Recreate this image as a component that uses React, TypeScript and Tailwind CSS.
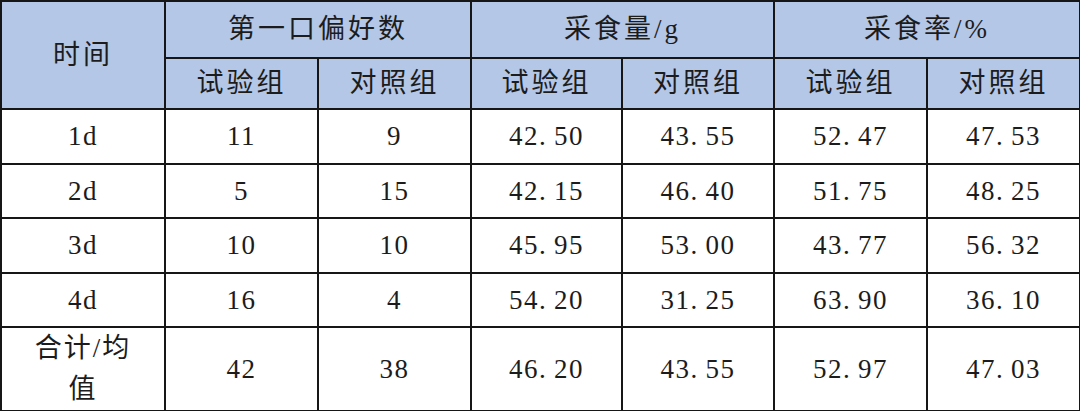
const FONT = "font-['Liberation_Serif','Noto_Sans_CJK_SC',serif]";

const rows = [
  ['1d', '11', '9', '42.50', '43.55', '52.47', '47.53'],
  ['2d', '5', '15', '42.15', '46.40', '51.75', '48.25'],
  ['3d', '10', '10', '45.95', '53.00', '43.77', '56.32'],
  ['4d', '16', '4', '54.20', '31.25', '63.90', '36.10'],
];

const total = ['42', '38', '46.20', '43.55', '52.97', '47.03'];

const colWidths = [164, 153, 153, 151, 152, 153, 153];

// SimSun-style half-width period: give the dot a full digit cell
function Num({ v }: { v: string }) {
  const parts = v.split('.');
  if (parts.length === 1) return <>{v}</>;
  return (
    <>
      {parts[0]}
      <span className="inline-block w-[15px] text-left">.</span>
      {parts[1]}
    </>
  );
}

const th = 'border-2 border-[#161616] bg-[#b4c7e7] font-normal text-center align-middle tracking-[3px]';
const td = 'border-2 border-[#161616] bg-white text-center align-middle tracking-[1.5px]';

export default function App() {
  return (
    <div className={`w-[1080px] h-[411px] bg-white overflow-hidden ${FONT} text-[27px] text-[#1c1c1c]`}>
      <table className="w-[1079px] table-fixed border-collapse border-2 border-[#161616]">
        <colgroup>
          {colWidths.map((w, i) => (
            <col key={i} style={{ width: w }} />
          ))}
        </colgroup>
        <thead>
          <tr className="h-[57px]">
            <th rowSpan={2} className={th}>时间</th>
            <th colSpan={2} className={th}>第一口偏好数</th>
            <th colSpan={2} className={th}>采食量/g</th>
            <th colSpan={2} className={th}>采食率/%</th>
          </tr>
          <tr className="h-[51px]">
            <th className={th}>试验组</th>
            <th className={th}>对照组</th>
            <th className={th}>试验组</th>
            <th className={th}>对照组</th>
            <th className={th}>试验组</th>
            <th className={th}>对照组</th>
          </tr>
        </thead>
        <tbody>
          {rows.map((r, i) => (
            <tr key={r[0]} className={i % 2 === 0 ? 'h-[55px]' : 'h-[54px]'}>
              {r.map((c, j) => (
                <td key={j} className={td}>
                  <Num v={c} />
                </td>
              ))}
            </tr>
          ))}
          <tr className="h-[84px]">
            <td className={`${td} leading-[41px] tracking-[2px]`}>
              合计/均
              <br />
              值
            </td>
            {total.map((c, j) => (
              <td key={j} className={td}>
                <Num v={c} />
              </td>
            ))}
          </tr>
        </tbody>
      </table>
    </div>
  );
}
